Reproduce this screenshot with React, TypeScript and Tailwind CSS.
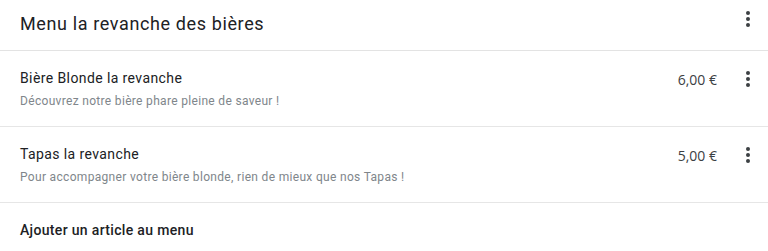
import React from 'react';

const items = [
  { name: 'Bière Blonde la revanche', desc: 'Découvrez notre bière phare pleine de saveur !', price: '6,00 €' },
  { name: 'Tapas la revanche', desc: 'Pour accompagner votre bière blonde, rien de mieux que nos Tapas !', price: '5,00 €' },
];

function MoreVert() {
  return (
    <svg width="24" height="24" viewBox="0 0 24 24" className="text-[#3c4043]">
      <circle cx="12" cy="6" r="2" fill="currentColor" />
      <circle cx="12" cy="12" r="2" fill="currentColor" />
      <circle cx="12" cy="18" r="2" fill="currentColor" />
    </svg>
  );
}

export default function App() {
  return (
    <div className="w-[768px] h-[251px] bg-white overflow-hidden font-['Roboto',sans-serif]">
      <div className="h-[51px] flex items-center pl-5 pr-[8px] border-b border-[#e3e3e3]">
        <h1 className="flex-1 text-[18px] tracking-[0.62px] text-[#202124] pb-[3px]">Menu la revanche des bières</h1>
        <div className="w-[24px] h-[24px] mb-[12px]">
          <MoreVert />
        </div>
      </div>
      {items.map((it) => (
        <div key={it.name} className="h-[76px] flex items-center pl-5 pr-[8px] border-b border-[#e6e6e6]">
          <div className="flex-1 flex flex-col gap-[6px] pt-[1px]">
            <div className="text-[14px] tracking-[0.4px] text-[#202124] leading-[18px]">{it.name}</div>
            <div className="text-[12px] tracking-[0.32px] text-[#80868b] leading-[16px]">{it.desc}</div>
          </div>
          <div className="flex items-center self-start mt-[16px]">
            <span className="font-['Open_Sans',sans-serif] text-[14px] text-[#3c4043] mr-[19px] pt-[1px]">{it.price}</span>
            <div className="w-[24px] h-[24px]">
              <MoreVert />
            </div>
          </div>
        </div>
      ))}
      <div className="h-[49px] flex items-center pl-5">
        <span className="text-[14px] tracking-[0.33px] font-medium text-[#202124] pt-[6px]">Ajouter un article au menu</span>
      </div>
    </div>
  );
}
